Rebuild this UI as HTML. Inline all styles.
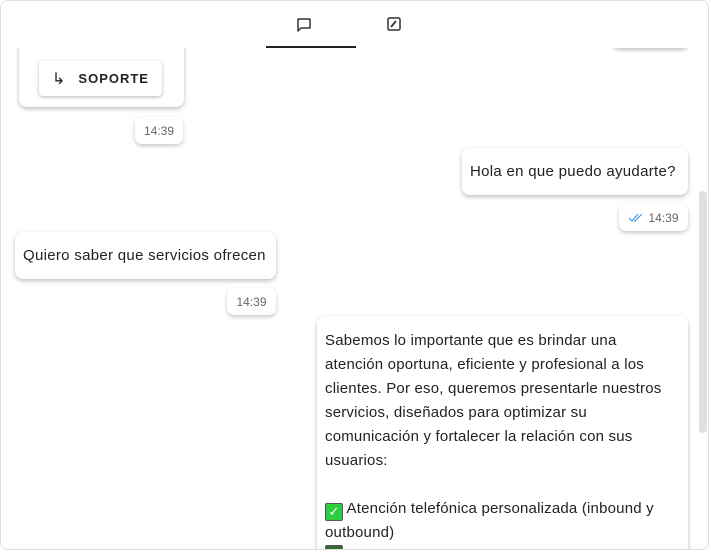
<!DOCTYPE html>
<html><head><meta charset="utf-8"><style>
*{box-sizing:border-box;margin:0;padding:0}
body{width:711px;height:556px;background:#fff;font-family:"Liberation Sans",sans-serif;overflow:hidden;position:relative;color:#222}
.frame{position:absolute;left:0;top:0;width:709px;height:550px;border:1px solid #ddd;border-radius:8px;overflow:hidden;background:#fff}
.abs{position:absolute}
.card{position:absolute;background:#fff;border-radius:8px;box-shadow:0 2px 5px rgba(0,0,0,.25)}
.msg{font-size:15px;line-height:24px;padding:0 8px;display:flex;align-items:center;letter-spacing:.3px;white-space:nowrap}
.ts{position:absolute;background:#fff;border-radius:7px;box-shadow:0 2px 4px rgba(0,0,0,.22);font-size:12px;color:#666;display:flex;align-items:center;justify-content:center;height:27px}
</style></head><body>
<div class="frame">
  <div class="card" style="left:611px;top:20px;width:77px;height:27px"></div>
  <div class="card" style="left:18px;top:30px;width:165px;height:76px">
    <div class="card" style="left:20px;top:30px;width:123px;height:35px;border-radius:4px;box-shadow:0 1px 3px rgba(0,0,0,.3);font-size:13px;font-weight:bold;letter-spacing:1px;display:flex;align-items:center;padding-left:13px;color:#222">
      <span style="font-weight:normal;font-size:16px;margin-right:12px">↳</span>SOPORTE</div>
  </div>
  <div class="ts" style="left:134px;top:116px;width:48px">14:39</div>
  <div class="card msg" style="left:461px;top:147px;width:226px;height:47px">Hola en que puedo ayudarte?</div>
  <div class="ts" style="left:618px;top:203px;width:69px"><svg width="16" height="10" viewBox="0 0 16 10" style="margin-right:4px"><path d="M1 5l3 3 6-7M6 8l1 0 7-7" fill="none" stroke="#4a9be8" stroke-width="1.2"/></svg>14:39</div>
  <div class="card msg" style="left:14px;top:231px;width:261px;height:47px">Quiero saber que servicios ofrecen</div>
  <div class="ts" style="left:226px;top:287px;width:49px">14:39</div>
  <div class="card" style="left:316px;top:315px;width:371px;height:260px;font-size:15px;line-height:24px;padding:13px 8px 0 8px;letter-spacing:.2px;white-space:nowrap">
    Sabemos lo importante que es brindar una<br>atención oportuna, eficiente y profesional a los<br>clientes. Por eso, queremos presentarle nuestros<br>servicios, diseñados para optimizar su<br>comunicación y fortalecer la relación con sus<br>usuarios:<br><br>
    <span style="display:inline-block;width:18px;height:18px;background:#2ecc40;border:1px solid #555;border-radius:2px;color:#fff;font-size:13px;line-height:16px;text-align:center;vertical-align:-3px">✓</span> Atención telefónica personalizada (inbound y<br>outbound)<br>
    <span style="display:inline-block;width:18px;height:18px;background:#2e6b30;border:1px solid #555;border-radius:2px"></span>
  </div>
  <div class="abs" style="left:0;top:0;width:706px;height:47px;background:#fff">
    <svg class="abs" style="left:295px;top:16px" width="16" height="16" viewBox="0 0 16 16"><path d="M2 2h12v9H5l-3 3z" fill="none" stroke="#333" stroke-width="1.5" stroke-linejoin="round"/></svg>
    <svg class="abs" style="left:386px;top:16px" width="14" height="14" viewBox="0 0 14 14"><rect x="1" y="1" width="12" height="12" rx="1.5" fill="none" stroke="#333" stroke-width="1.5"/><path d="M4 10l5-6" stroke="#333" stroke-width="1.8"/></svg>
    <div class="abs" style="left:265px;top:45px;width:90px;height:2px;background:#222"></div>
  </div>
  <div class="abs" style="left:698px;top:190px;width:8px;height:242px;background:#e0e0e0;border-radius:4px"></div>
</div>
</body></html>
